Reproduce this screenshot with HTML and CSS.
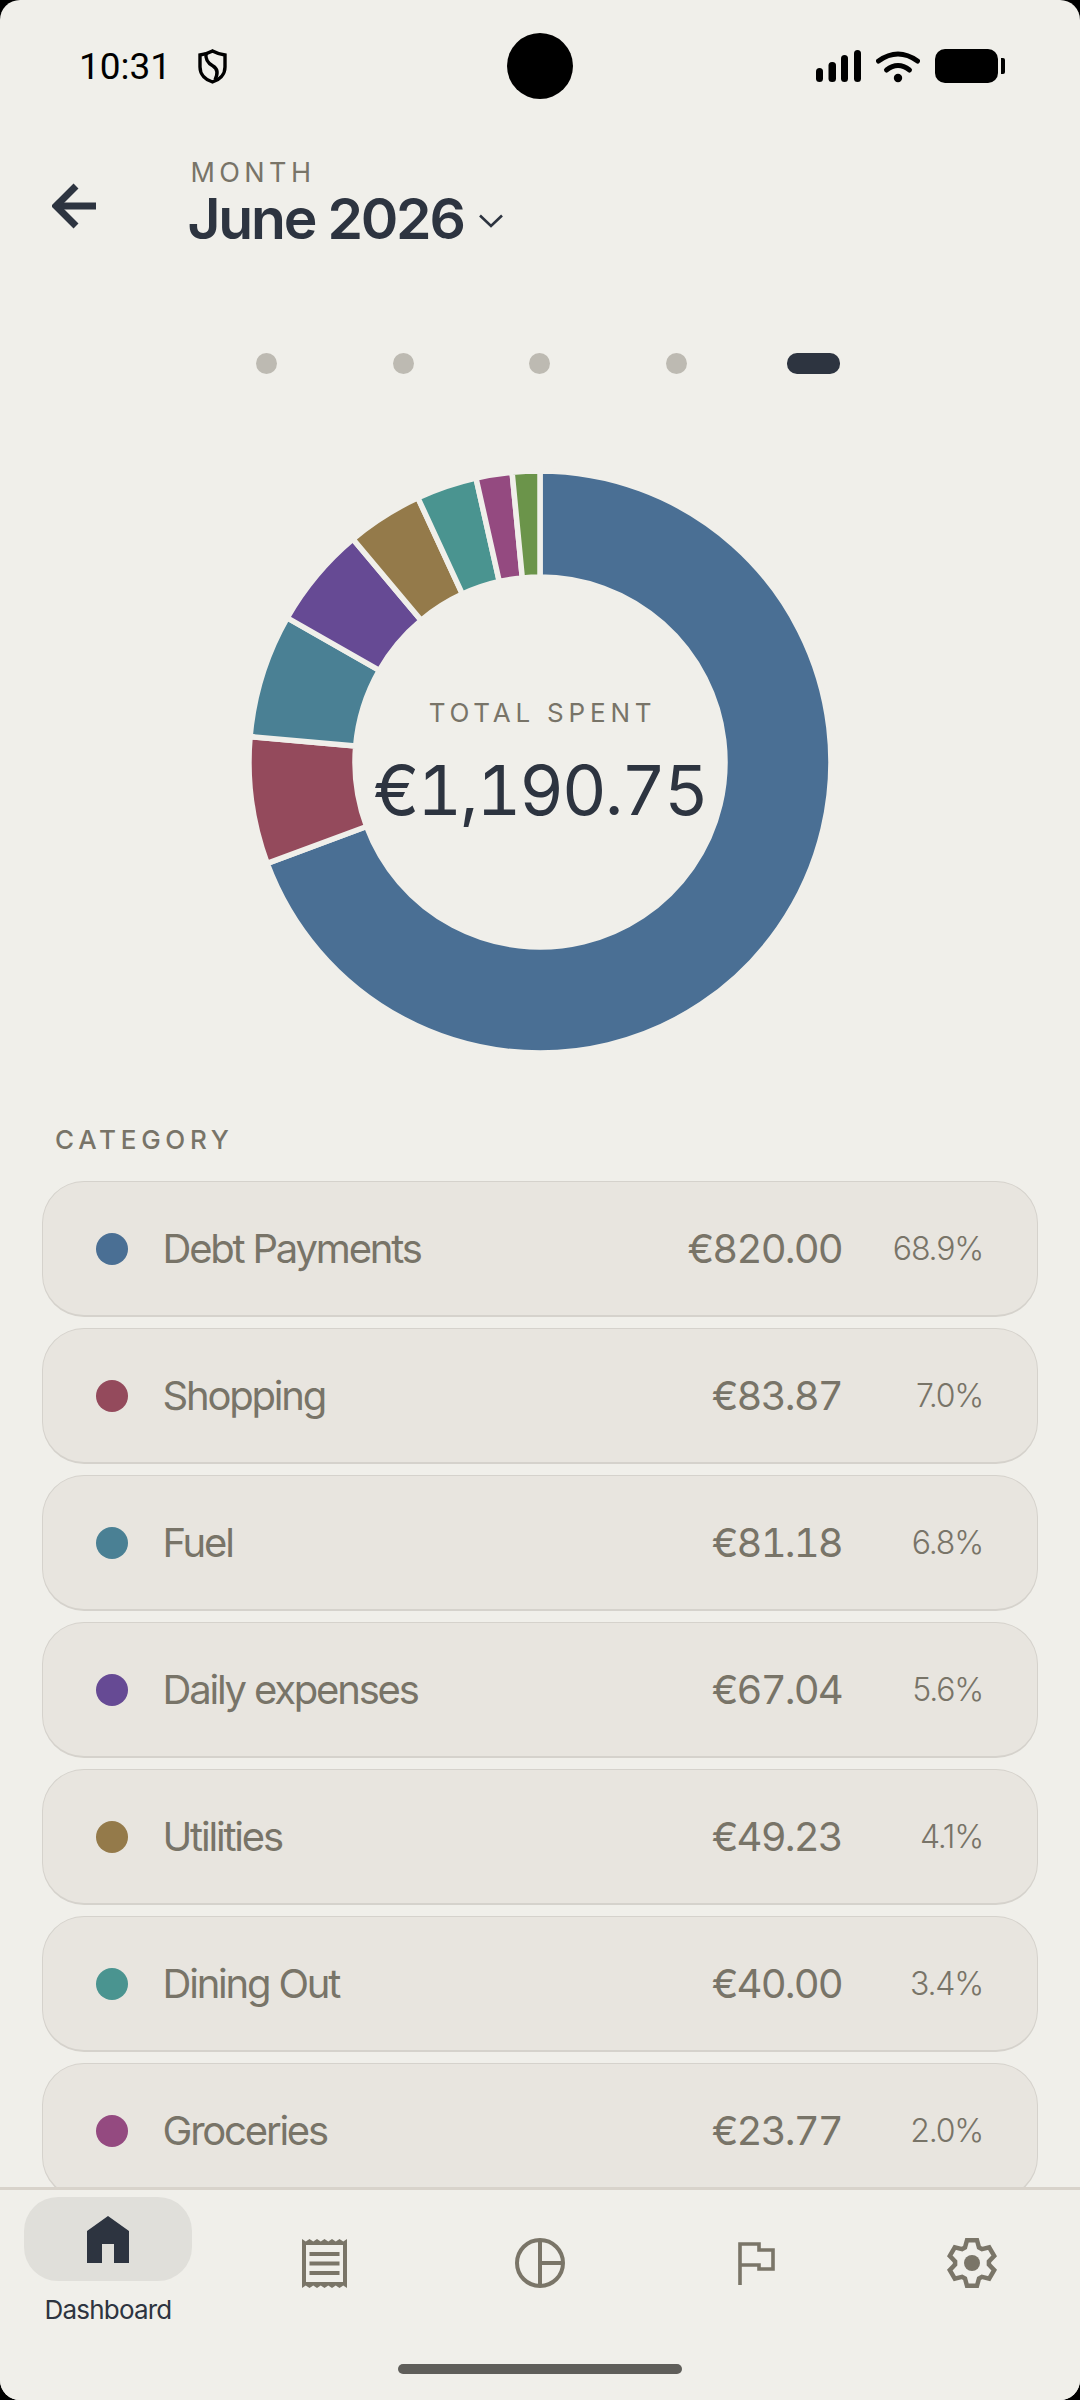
FILE: index.html
```html
<!DOCTYPE html>
<html lang="en">

<head>
    <meta charset="UTF-8">
    <meta name="viewport" content="width=device-width, initial-scale=1.0">
    <title>Month summary</title>
    <link rel="stylesheet" href="styles.css">
</head>

<body>
    <div class="screen">
        <div class="camera"></div>

        <div class="status-bar">
            <span class="time">10:31</span>
            <svg class="shield" width="29" height="35" viewBox="0 0 29 35" fill="none" stroke="#000" stroke-width="3.4">
                <path d="M2 6 Q9 5 14.5 2 Q20 5 27 6 V18 C27 26 21 31 14.5 33 C8 31 2 26 2 18 Z" />
                <path d="M8 4 C7 12 11 15 15 17 C20 20 20 25 17 31" />
            </svg>
            <div class="status-icons">
                <svg width="45" height="32" viewBox="0 0 45 32" fill="#000">
                    <rect x="0" y="18" width="7" height="14" rx="3.5" />
                    <rect x="12.5" y="12" width="7.5" height="20" rx="3.5" />
                    <rect x="25" y="5" width="7" height="27" rx="3.5" />
                    <rect x="38" y="0" width="7" height="32" rx="3.5" />
                </svg>
                <svg width="44" height="33" viewBox="0 0 44 33" fill="none" stroke="#000" stroke-width="5" stroke-linecap="round">
                    <path d="M2.5 11 Q22 -3 41.5 11" />
                    <path d="M10.5 20 Q22 11 33.5 20" />
                    <circle cx="22" cy="28" r="4.2" fill="#000" stroke="none" />
                </svg>
                <div class="battery">
                    <div class="battery-body"></div>
                    <div class="battery-nub"></div>
                </div>
            </div>
        </div>

        <div class="header">
            <svg class="back" width="44" height="46" viewBox="0 0 44 46" fill="none" stroke="#2d3440" stroke-width="7">
                <path d="M44 23 H5" />
                <path d="M24 3 L4 23 L24 43" />
            </svg>
            <div class="month">
                <div class="month-label">MONTH</div>
                <div class="month-title">
                    <span>June 2026</span>
                    <svg width="24" height="14" viewBox="0 0 24 14" fill="none" stroke="#2d3440" stroke-width="2.6">
                        <path d="M1 1.5 L12 12 L23 1.5" />
                    </svg>
                </div>
            </div>
        </div>

        <div class="pager">
            <span class="pager-dot"></span>
            <span class="pager-dot"></span>
            <span class="pager-dot"></span>
            <span class="pager-dot"></span>
            <span class="pager-dot active"></span>
        </div>

        <div class="donut">
            <svg width="600" height="600" viewBox="-300 -300 600 600" stroke="#f0efea" stroke-width="5.5">
                <path fill="#4a6f94" d="M0 -291 A291 291 0 1 1 -272.8 101.4 L-173.4 64.5 A185 185 0 1 0 0 -185 Z" />
                <path fill="#944a5c" d="M-272.8 101.4 A291 291 0 0 1 -289.9 -25.4 L-184.3 -16.1 A185 185 0 0 0 -173.4 64.5 Z" />
                <path fill="#4a8094" d="M-289.9 -25.4 A291 291 0 0 1 -252.8 -144.2 L-160.7 -91.7 A185 185 0 0 0 -184.3 -16.1 Z" />
                <path fill="#664a94" d="M-252.8 -144.2 A291 291 0 0 1 -187.1 -222.9 L-118.9 -141.7 A185 185 0 0 0 -160.7 -91.7 Z" />
                <path fill="#947a4a" d="M-187.1 -222.9 A291 291 0 0 1 -122.1 -264.2 L-77.6 -167.9 A185 185 0 0 0 -118.9 -141.7 Z" />
                <path fill="#4a9490" d="M-122.1 -264.2 A291 291 0 0 1 -64 -283.9 L-40.7 -180.5 A185 185 0 0 0 -77.6 -167.9 Z" />
                <path fill="#944a80" d="M-64 -283.9 A291 291 0 0 1 -27.9 -289.7 L-17.7 -184.1 A185 185 0 0 0 -40.7 -180.5 Z" />
                <path fill="#6b944a" d="M-27.9 -289.7 A291 291 0 0 1 0 -291 L0 -185 A185 185 0 0 0 -17.7 -184.1 Z" />
            </svg>
            <div class="donut-center">
                <div class="donut-label">TOTAL SPENT</div>
                <div class="donut-total">€1,190.75</div>
            </div>
        </div>

        <div class="section-label">CATEGORY</div>

        <div class="list">
            <div class="row">
                <span class="row-dot c-debt"></span>
                <span class="row-name">Debt Payments</span>
                <span class="row-amount">€820.00</span>
                <span class="row-pct">68.9%</span>
            </div>
            <div class="row">
                <span class="row-dot c-shopping"></span>
                <span class="row-name">Shopping</span>
                <span class="row-amount">€83.87</span>
                <span class="row-pct">7.0%</span>
            </div>
            <div class="row">
                <span class="row-dot c-fuel"></span>
                <span class="row-name">Fuel</span>
                <span class="row-amount">€81.18</span>
                <span class="row-pct">6.8%</span>
            </div>
            <div class="row">
                <span class="row-dot c-daily"></span>
                <span class="row-name">Daily expenses</span>
                <span class="row-amount">€67.04</span>
                <span class="row-pct">5.6%</span>
            </div>
            <div class="row">
                <span class="row-dot c-utilities"></span>
                <span class="row-name">Utilities</span>
                <span class="row-amount">€49.23</span>
                <span class="row-pct">4.1%</span>
            </div>
            <div class="row">
                <span class="row-dot c-dining"></span>
                <span class="row-name">Dining Out</span>
                <span class="row-amount">€40.00</span>
                <span class="row-pct">3.4%</span>
            </div>
            <div class="row">
                <span class="row-dot c-groceries"></span>
                <span class="row-name">Groceries</span>
                <span class="row-amount">€23.77</span>
                <span class="row-pct">2.0%</span>
            </div>
        </div>

        <nav class="nav">
            <div class="nav-item active">
                <div class="nav-pill">
                    <svg width="42" height="47" viewBox="0 0 42 47" fill="#2d3440">
                        <path d="M21 0 L42 15 V47 H27 V28 H15 V47 H0 V15 Z" />
                    </svg>
                </div>
                <div class="nav-label">Dashboard</div>
            </div>
            <div class="nav-item">
                <svg width="45" height="49" viewBox="0 0 45 49" fill="#7a7568">
                    <path fill-rule="evenodd" d="M0 0 l3.75 2.5 3.75 -2.5 3.75 2.5 3.75 -2.5 3.75 2.5 3.75 -2.5 3.75 2.5 3.75 -2.5 3.75 2.5 3.75 -2.5 3.75 2.5 3.75 -2.5 V49 l-3.75 -2.5 -3.75 2.5 -3.75 -2.5 -3.75 2.5 -3.75 -2.5 -3.75 2.5 -3.75 -2.5 -3.75 2.5 -3.75 -2.5 -3.75 2.5 -3.75 -2.5 -3.75 2.5 Z M4 6 V43 H41 V6 Z" />
                    <rect x="7.5" y="13" width="30" height="4" />
                    <rect x="7.5" y="22.5" width="30" height="4" />
                    <rect x="7.5" y="32" width="30" height="4" />
                </svg>
            </div>
            <div class="nav-item">
                <svg width="50" height="50" viewBox="0 0 50 50" fill="none" stroke="#7a7568" stroke-width="4">
                    <circle cx="25" cy="25" r="23" />
                    <path d="M25 2 V48" />
                    <path d="M25 25 H48" />
                </svg>
            </div>
            <div class="nav-item">
                <svg width="37" height="43" viewBox="0 0 37 43" fill="none" stroke="#7a7568" stroke-width="3.6">
                    <path d="M2 43 V2 H21 V8 H35 V27 H21 V23 H2" />
                </svg>
            </div>
            <div class="nav-item">
                <svg width="52" height="52" viewBox="-26 -26 52 52" fill="none" stroke="#7a7568" stroke-width="4.5">
                    <path d="M-7 -15.5 L-5 -22.75 L5 -22.75 L7 -15.5 L9.92 -13.81 L17.2 -15.71 L22.2 -7.05 L16.92 -1.69 L16.92 1.69 L22.2 7.05 L17.2 15.71 L9.92 13.81 L7 15.5 L5 22.75 L-5 22.75 L-7 15.5 L-9.92 13.81 L-17.2 15.71 L-22.2 7.05 L-16.92 1.69 L-16.92 -1.69 L-22.2 -7.05 L-17.2 -15.71 L-9.92 -13.81 Z" />
                    <circle r="8" fill="#7a7568" stroke="none" />
                </svg>
            </div>
        </nav>

        <div class="gesture-area">
            <div class="gesture-bar"></div>
        </div>
    </div>
</body>

</html>
```

FILE: styles.css
```css
* {
    box-sizing: border-box;
}

html,
body {
    margin: 0;
    padding: 0;
    background-color: #000;
}

body {
    width: 1080px;
    height: 2400px;
    overflow: hidden;
    font-family: "Inter", "Noto Sans", sans-serif;
    color: #787468;
}

.screen {
    position: relative;
    width: 1080px;
    height: 2400px;
    display: flex;
    flex-direction: column;
    overflow: hidden;
    border-radius: 20px;
    background-color: #f0efea;
}

.camera {
    position: absolute;
    top: 33px;
    left: 507px;
    width: 66px;
    height: 66px;
    border-radius: 50%;
    background-color: #000;
}

/* status bar */
.status-bar {
    flex: none;
    height: 132px;
    padding: 0 75px 0 79px;
    display: flex;
    align-items: center;
    color: #000;
}

.time {
    font-family: "Roboto", sans-serif;
    font-size: 37px;
}

.shield {
    margin-left: 27px;
}

.status-icons {
    margin-left: auto;
    display: flex;
    align-items: center;
    gap: 15px;
}

.battery {
    display: flex;
    align-items: center;
    gap: 3px;
}

.battery-body {
    width: 63px;
    height: 34px;
    border-radius: 10px;
    background-color: #000;
}

.battery-nub {
    width: 4px;
    height: 16px;
    border-radius: 0 2px 2px 0;
    background-color: #000;
}

/* header */
.header {
    flex: none;
    height: 130px;
    padding-left: 52px;
    display: flex;
    align-items: center;
}

.back {
    margin-top: 17px;
}

.month {
    margin: 12px 0 0 91.5px;
}

.month-label {
    margin-left: 3px;
    font-size: 27px;
    line-height: 32px;
    letter-spacing: 4.4px;
}

.month-title {
    display: flex;
    align-items: center;
    gap: 15px;
    font-size: 57px;
    line-height: 60px;
    font-weight: 600;
    letter-spacing: -2.2px;
    color: #2d3440;
}

.month-title svg {
    margin-top: 4px;
}

/* pager */
.pager {
    flex: none;
    margin-top: 91px;
    padding: 0 198px;
    display: grid;
    grid-template-columns: repeat(5, 1fr);
    justify-items: center;
}

.pager-dot {
    width: 21px;
    height: 21px;
    border-radius: 50%;
    background-color: #bdbab2;
}

.pager-dot.active {
    width: 53px;
    border-radius: 10px;
    background-color: #2d3440;
}

/* donut */
.donut {
    position: relative;
    flex: none;
    width: 600px;
    height: 600px;
    margin: 88px auto 0;
}

.donut svg {
    display: block;
}

.donut-center {
    position: absolute;
    inset: 0;
    padding-top: 3px;
    display: flex;
    flex-direction: column;
    align-items: center;
    justify-content: center;
}

.donut-label {
    padding-left: 5px;
    font-size: 26px;
    line-height: 32px;
    letter-spacing: 4.8px;
    margin-bottom: 20px;
}

.donut-total {
    font-size: 69px;
    line-height: 82px;
    font-weight: 420;
    letter-spacing: -2px;
    font-variant-numeric: tabular-nums;
    color: #2d3440;
}

/* category list */
.section-label {
    flex: none;
    margin: 62px 0 0 55px;
    font-size: 26px;
    line-height: 32px;
    font-weight: 500;
    letter-spacing: 4.7px;
}

.list {
    flex: 1;
    min-height: 0;
    margin-top: 25px;
    padding: 0 42px;
    overflow: hidden;
    display: flex;
    flex-direction: column;
    gap: 11px;
}

.row {
    flex: none;
    height: 136px;
    padding: 0 54px 0 52.5px;
    display: flex;
    align-items: center;
    border: 1.5px solid #d5d2cc;
    border-bottom-width: 2px;
    border-radius: 42px;
    background-color: #e8e5df;
}

.row-dot {
    flex: none;
    width: 32px;
    height: 32px;
    border-radius: 50%;
}

.c-debt { background-color: #4a6f94; }
.c-shopping { background-color: #944a5c; }
.c-fuel { background-color: #4a8094; }
.c-daily { background-color: #664a94; }
.c-utilities { background-color: #947a4a; }
.c-dining { background-color: #4a9490; }
.c-groceries { background-color: #944a80; }

.row-name {
    flex: 1;
    margin-left: 35px;
    font-size: 40px;
    font-weight: 420;
    letter-spacing: -2.2px;
}

.row-amount {
    font-size: 40px;
    font-weight: 420;
    letter-spacing: -1.8px;
    font-variant-numeric: tabular-nums;
}

.row-pct {
    width: 141px;
    text-align: right;
    font-size: 32px;
    font-weight: 350;
    letter-spacing: -1.2px;
}

/* bottom nav */
.nav {
    flex: none;
    height: 149px;
    display: grid;
    grid-template-columns: repeat(5, 1fr);
    border-top: 3px solid #d8d3cb;
    background-color: #f0efea;
}

.nav-item {
    display: flex;
    align-items: center;
    justify-content: center;
}

.nav-item.active {
    flex-direction: column;
    justify-content: flex-start;
    padding-top: 7px;
}

.nav-pill {
    width: 168px;
    height: 84px;
    display: flex;
    align-items: center;
    justify-content: center;
    border-radius: 34px;
    background-color: #e0dfda;
}

.nav-label {
    margin-top: 13px;
    font-size: 26px;
    line-height: 32px;
    letter-spacing: -0.8px;
    color: #2d3440;
}

.gesture-area {
    flex: none;
    height: 64px;
    padding-top: 28px;
    background-color: #f0efea;
}

.gesture-bar {
    width: 284px;
    height: 10px;
    margin: 0 auto;
    border-radius: 5px;
    background-color: #5f5e5a;
}
```
